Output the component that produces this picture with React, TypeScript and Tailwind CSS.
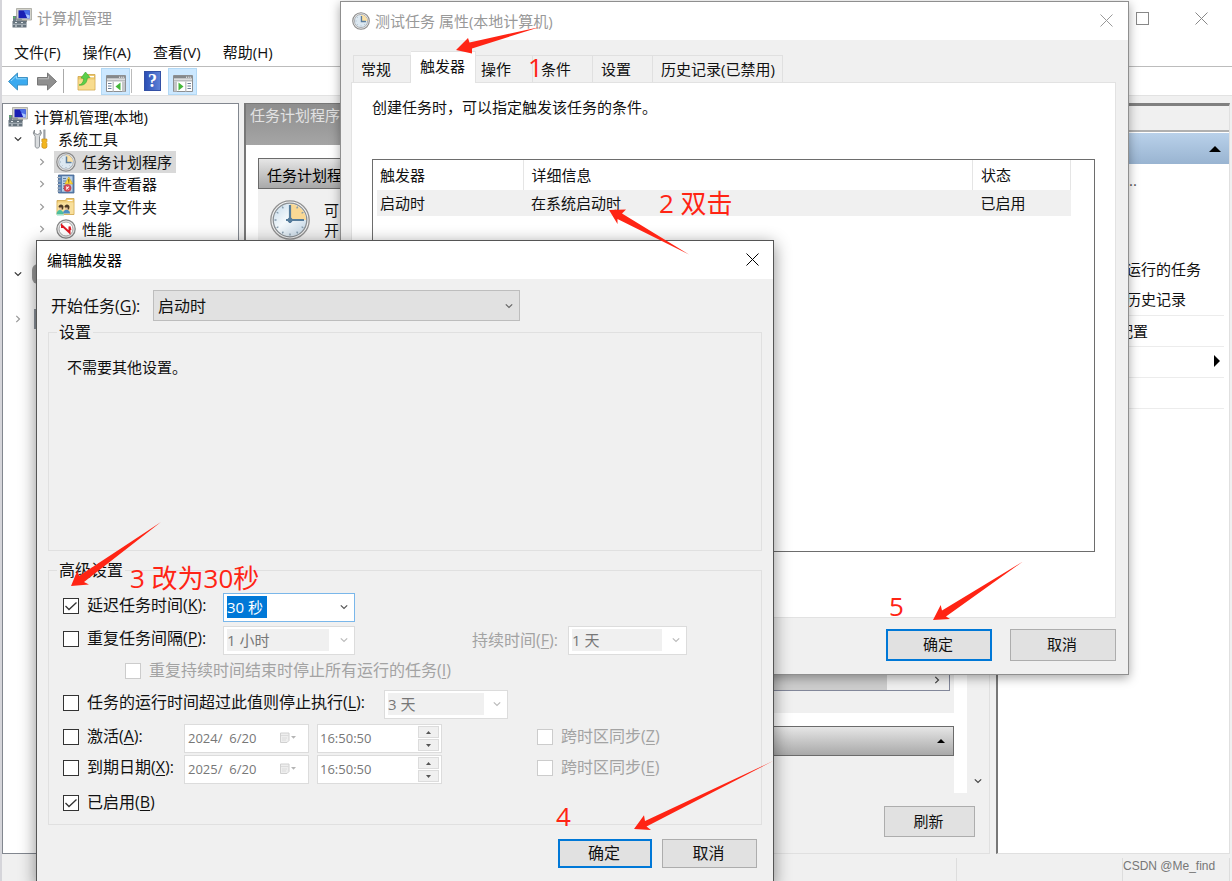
import React from "react";

const ACCENT_SHORTCUT = "underline underline-offset-2 decoration-1";

/* ---------- icons ---------- */

function ComputerIcon({ className = "" }: { className?: string }) {
  return (
    <svg viewBox="0 0 20 20" className={className} aria-hidden="true">
      <path d="M4.500.500h15v11.500h-15z" fill="#d3d3cb" stroke="#a3a39c" strokeWidth=".8" />
      <path d="M6.500 2.300h11.200v8H6.500z" fill="#1a1fb4" />
      <path d="M11.500 2.300h6.200v8h-2z" fill="#4b70e8" />
      <path d="m13.500 6 4.200 1.500v2.800h-2.500z" fill="#a9c6ff" />
      <path d="M9 12h6v2H9z" fill="#9a9a93" />
      <path d="M1 8h3.500v5H1z" fill="#6e7d88" />
      <path d="M1.500 8.700h1.300v1.500H1.500z" fill="#4be04b" />
      <path d="M5 10.500h4.500l1 2.500H5z" fill="#8b9196" />
      <path d="M.500 13h14v6.500H.500z" fill="#66737d" />
      <path d="M.500 15.800h14v.9H.500z" fill="#b8c1c7" />
      <path d="M3 14h2v1H3zm6 0h2v1H9zM3 17.500h2v1H3zm6 0h2v1H9z" fill="#dfe5e8" />
    </svg>
  );
}

function ToolsIcon({ className = "" }: { className?: string }) {
  return (
    <svg viewBox="0 0 20 20" className={className} aria-hidden="true">
      <path d="M2.500 1 1.200 4 3.200 7.500V17c0 2.800 4.300 2.800 4.300 0V7.500L9.500 4 8.200 1v3.500l-2.700 1-3-1z" fill="#d9dcde" stroke="#858a8e" strokeWidth=".9" />
      <path d="M11.600.8h1.600v9h-1.600z" fill="#a3a8ac" stroke="#7c8286" strokeWidth=".4" />
      <path d="M9.900 10h5v2.500l-.7 1 .7 1V18c0 1.800-5 1.800-5 0v-3.500l.7-1-.7-1z" fill="#f3b61f" stroke="#c58b14" strokeWidth=".7" />
    </svg>
  );
}

function SmallClockIcon({ className = "" }: { className?: string }) {
  return (
    <svg viewBox="0 0 20 20" className={className} aria-hidden="true">
      <circle cx="10" cy="10" r="9.200" fill="#e9e9e9" stroke="#8a8a8a" strokeWidth="1.200" />
      <circle cx="10" cy="10" r="7.300" fill="#dce8f1" stroke="#a0a4a8" strokeWidth=".9" />
      <path d="M10 10V3a7 7 0 0 1 7 7z" fill="#fbe0a4" />
      <path d="M10.500 4.500v6h5" fill="none" stroke="#5a7d9e" strokeWidth="1.500" />
      <path d="M10 15v1M4 10h1M5.700 14.300l.7-.7M14.300 14.300l-.7-.7M5.700 5.700l.7.7" stroke="#8ba0b1" strokeWidth=".8" />
    </svg>
  );
}

function ClockIcon({ className = "" }: { className?: string }) {
  return (
    <svg viewBox="0 0 40 40" className={className} aria-hidden="true">
      <defs>
        <linearGradient id="face" x1="0" y1="0" x2="1" y2="1">
          <stop offset="0" stopColor="#c3d9ea" />
          <stop offset=".45" stopColor="#f4f9fc" />
          <stop offset="1" stopColor="#bcd0e0" />
        </linearGradient>
      </defs>
      <circle cx="20" cy="20" r="19.200" fill="#f2f2f2" stroke="#919191" strokeWidth="1.300" />
      <circle cx="20" cy="20" r="16.800" fill="url(#face)" stroke="#8a8f93" strokeWidth="1.300" />
      <path d="M20 20V4A16 16 0 0 1 36 20z" fill="#f9d894" />
      <g stroke="#8298a9" strokeWidth="1.300">
        <path d="M20 33.500v2M4.500 20h2M12.300 6.700l1 1.700M27.700 6.700l-1 1.700M6.700 12.300l1.700 1M6.700 27.700l1.700-1M12.300 33.300l1-1.700M27.700 33.300l-1-1.700M33.300 27.700l-1.700-1M33.300 12.300l-1.700 1" />
      </g>
      <path d="M20 5v18M16 20h18" fill="none" stroke="#557c9c" strokeWidth="2.200" />
      <circle cx="20" cy="20" r="2.500" fill="#557c9c" />
    </svg>
  );
}

function EventIcon({ className = "" }: { className?: string }) {
  return (
    <svg viewBox="0 0 20 20" className={className} aria-hidden="true">
      <path d="M2.500 1h15.500v18H2.500z" fill="#5c83b3" stroke="#44658f" strokeWidth=".8" />
      <path d="M6 2.200h10.500v15.500H6z" fill="#b9d0e6" />
      <path d="M7 4.500h3M7 7h3M7 9.500h2M7 12h2M7 14.500h1" stroke="#5f7d9d" />
      <path d="m12.800 3 4 7H8.800z" fill="#ffd83c" stroke="#c7940a" strokeWidth=".5" />
      <path d="M12.800 5.200v2.600M12.800 8.400v.8" stroke="#4d3b00" strokeWidth=".9" />
      <circle cx="11.500" cy="14" r="3.600" fill="#d94a55" stroke="#b03038" strokeWidth=".5" />
      <path d="m10.200 12.700 2.600 2.600M12.800 12.700l-2.600 2.600" stroke="#fff" strokeWidth="1.100" />
      <path d="M1 3.500h3.500M1 7h3.500M1 10.500h3.500M1 14h3.500M1 17h3.500" stroke="#b4bdc6" strokeWidth="1.200" />
    </svg>
  );
}

function ShareIcon({ className = "" }: { className?: string }) {
  return (
    <svg viewBox="0 0 20 20" className={className} aria-hidden="true">
      <path d="M1 3.500h8.500L10.500 1.500H18v16H1z" fill="#f0cd78" stroke="#cda347" strokeWidth=".8" />
      <path d="M1.500 5.500h16v11.500h-16z" fill="#f8df9c" />
      <path d="M11.500 3h5v1h-5z" fill="#fff" />
      <path d="M2.500 10c0-3.500 5-3.500 5 0l-.5 2.500h-2z" fill="#4c3a26" />
      <path d="M8.500 10c0-3.500 5-3.500 5 0l-.5 2.500h-2z" fill="#4c3a26" />
      <path d="M3.200 10.500h2.500v2.500H3.200zm6 0h2.500v2.500H9.200z" fill="#ecc49b" />
      <path d="M.500 17.500c0-6 7-6 7 0z" fill="#4cbf9e" />
      <path d="M7 16.500c0-5 7-5 7 0z" fill="#4c8fc4" />
      <path d="M1 18h7" stroke="#b2ead9" strokeWidth="1.500" />
    </svg>
  );
}

function PerfIcon({ className = "" }: { className?: string }) {
  return (
    <svg viewBox="0 0 20 20" className={className} aria-hidden="true">
      <circle cx="10" cy="10" r="9.200" fill="#e9e9e9" stroke="#858585" strokeWidth="1.200" />
      <circle cx="10" cy="10" r="7" fill="#fff" stroke="#a8a8a8" strokeWidth="1" />
      <path d="M6 9V6.500l7.500 7V7.500l1 3.500" fill="none" stroke="#e01822" strokeWidth="2" />
    </svg>
  );
}

function NavArrow({ forward = false }: { forward?: boolean }) {
  return (
    <svg viewBox="0 0 22 20" className="h-5 w-[22px]" aria-hidden="true">
      {forward ? (
        <path d="M1.500 6.500H11.500V2L20.500 10.500l-9 8.500v-5H1.500z" fill="#8f8f8f" stroke="#777" strokeLinejoin="round" />
      ) : (
        <path d="M20.500 6.500H10.500V2L1.500 10.500l9 8.500v-5h10z" fill="#3aaaf0" stroke="#3f92c4" strokeLinejoin="round" />
      )}
      <path d={forward ? "M2.500 7.800h10V5" : "M19.500 7.800h-10V5L4 10"} fill="none" stroke={forward ? "#b9b9b9" : "#8fd6fb"} />
    </svg>
  );
}

function FolderUpIcon() {
  return (
    <svg viewBox="0 0 20 20" className="size-5" aria-hidden="true">
      <path d="M2 5.500h8l1.500-2H19v15.500H2z" fill="#eec96c" stroke="#cfa54a" strokeWidth=".8" />
      <path d="M2.500 8.500h16v10h-16z" fill="#f8dc8e" />
      <path d="M13 5h5v1.300h-5z" fill="#fff" />
      <path d="M3 14c2.800-.5 4.300-2.500 4.800-6.500L5 7 9.500 1 14 6.500l-2.700.5c-.3 5-3.300 8-8.300 7z" fill="#5cd04a" stroke="#3aa52e" strokeWidth=".6" />
    </svg>
  );
}

function PaneIcon({ right = false }: { right?: boolean }) {
  return (
    <svg viewBox="0 0 20 17" className="mt-1 h-[17px] w-5" aria-hidden="true">
      <path d="M.500.500h19v16H.500z" fill="#fff" stroke="#8d8f91" />
      <path d="M1 1h18v2.500H1z" fill="#85898c" />
      <path d="M13 2.200h1.200M15.200 2.200h1.200M17.200 2.200h1" stroke="#fff" />
      <path d="M1 4.500h18v2H1z" fill="#b9bcbe" />
      {right ? (
        <>
          <path d="M1 6.500h3v10H1zM12 6.500h1.500v10H12z" fill="#c4c6c8" />
          <path d="m5.500 7.500 5 4-5 4z" fill="#45b83a" />
          <path d="M14.500 8.500h3.500M14.500 11h3.500M14.500 13.500h3.500" stroke="#6a7f98" />
        </>
      ) : (
        <>
          <path d="M6.500 6.500H8v10H6.500zM16 6.500h3v10h-3z" fill="#c4c6c8" />
          <path d="m14.500 7.500-5 4 5 4z" fill="#45b83a" />
          <path d="M2 8.500h3.500M2 11h3.500M2 13.500h3.500" stroke="#6a7f98" />
        </>
      )}
    </svg>
  );
}

function HelpIcon() {
  return (
    <span className="flex h-5 w-[17px] items-center justify-center border border-[#3350a5] bg-linear-to-r from-[#2c4fb5] to-[#5d80d6] font-['Liberation_Serif',serif] text-lg leading-5 font-bold text-white">
      ?
    </span>
  );
}

function CloseIcon({ className = "" }: { className?: string }) {
  return (
    <svg viewBox="0 0 13 13" className={`size-[13px] ${className}`} aria-hidden="true">
      <path d="m.500.500 12 12M12.500.500l-12 12" fill="none" stroke="currentColor" strokeWidth="1" />
    </svg>
  );
}

function Chevron({ className = "", dir = "down" }: { className?: string; dir?: "down" | "right" }) {
  return (
    <svg viewBox="0 0 8 8" className={`size-2 ${className}`} aria-hidden="true">
      <path d={dir === "down" ? "M.800 2.300 4 5.500l3.200-3.200" : "M2.300.800 5.500 4 2.300 7.200"} fill="none" stroke="currentColor" strokeWidth="1.200" />
    </svg>
  );
}

function CalendarIcon() {
  return (
    <svg viewBox="0 0 16 12" className="h-3 w-4" aria-hidden="true">
      <path d="M.500 1h8.500v7.500l-2 2H.500z" fill="#eee" stroke="#d0d0d0" />
      <path d="M1 3.500h8M2 6h5M2 8h4" stroke="#dcdcdc" />
      <path d="M11 4h5l-2.500 2.800z" fill="#b5b5b5" />
    </svg>
  );
}

/* ---------- controls ---------- */

function PushButton({ children, primary = false, className = "" }: { children: React.ReactNode; primary?: boolean; className?: string }) {
  return (
    <button
      type="button"
      className={`flex items-center justify-center bg-[#e1e1e1] pr-0.5 pb-0.5 text-[#111] ${primary ? "border-2 border-[#0078d7]" : "border border-[#adadad]"} ${className}`}
    >
      {children}
    </button>
  );
}

function CheckField({ id, text, shortcut, suffix = "", checked = false, disabled = false, className = "" }: {
  id: string; text: string; shortcut: string; suffix?: string; checked?: boolean; disabled?: boolean; className?: string;
}) {
  return (
    <div className={`flex h-[26px] shrink-0 items-center gap-2 ${className}`}>
      <span className="relative size-4 shrink-0">
        <input
          id={id}
          type="checkbox"
          defaultChecked={checked}
          disabled={disabled}
          className="peer block size-4 appearance-none border border-[#333] bg-white disabled:border-[#ccc]"
        />
        <svg viewBox="0 0 16 16" className="pointer-events-none absolute inset-0 hidden size-4 peer-checked:block" aria-hidden="true">
          <path d="m2.500 8 3.500 3.500L13.500 4.500" fill="none" stroke="#333" strokeWidth="1.300" />
        </svg>
      </span>
      <label htmlFor={id} className={`pb-0.5 text-base leading-6 whitespace-nowrap ${disabled ? "text-[#a3a3a3]" : "text-[#111]"}`}>
        {text}(<span className={ACCENT_SHORTCUT}>{shortcut}</span>){suffix}
      </label>
    </div>
  );
}

function Combo({ label, value, active = false, className = "", fieldClass }: { label: string; value: string; active?: boolean; className?: string; fieldClass: string }) {
  return (
    <div className={`flex h-[29px] shrink-0 items-center justify-between border bg-white pr-1.5 pb-0.5 pl-[3px] ${active ? "border-[#7ab7ea]" : "border-[#dcdcdc]"} ${className}`}>
      <select
        aria-label={label}
        disabled={!active}
        className={`h-[22px] appearance-none leading-[22px] disabled:opacity-100 ${active ? "bg-[#0078d7] text-white" : "bg-[#f0f0f0] text-[#777]"} ${fieldClass}`}
      >
        <option>{value}</option>
      </select>
      <Chevron className={active ? "text-[#555]" : "text-[#bbb]"} />
    </div>
  );
}

function DateTime({ name, date, time }: { name: string; date: string; time: string }) {
  return (
    <div className="flex shrink-0 gap-2 text-[13px] text-[#777]">
      <div className="flex h-[29px] w-[125px] items-center justify-between border border-[#dcdcdc] bg-white pr-3 pb-0.5 pl-[3px]">
        <input aria-label={`${name} 日期`} disabled defaultValue={date} className="w-20 bg-transparent" />
        <CalendarIcon />
      </div>
      <div className="flex h-[29px] w-[125px] items-center justify-between border border-[#dcdcdc] bg-white px-0.5">
        <input aria-label={`${name} 时间`} disabled defaultValue={time} className="w-20 bg-transparent pb-0.5" />
        <div className="flex flex-col gap-px">
          {["M0 3h5L2.500 0z", "M0 0h5L2.500 3z"].map((d) => (
            <button key={d} type="button" disabled aria-label={d.startsWith("M0 3") ? "增加" : "减少"} className="flex h-3 w-[21px] items-center justify-center border border-[#dcdcdc] bg-[#f0f0f0]">
              <svg viewBox="0 0 5 3" className="h-[3px] w-[5px]"><path d={d} fill="#555" /></svg>
            </button>
          ))}
        </div>
      </div>
    </div>
  );
}

/* ---------- main window ---------- */

type Node = { text?: string; level: number; arrow?: "down" | "right"; icon?: React.ReactNode; selected?: boolean };

const TREE: Node[] = [
  { text: "计算机管理(本地)", level: 0, icon: <ComputerIcon className="size-5" /> },
  { text: "系统工具", level: 1, arrow: "down", icon: <ToolsIcon className="size-5" /> },
  { text: "任务计划程序", level: 2, arrow: "right", icon: <SmallClockIcon className="size-5" />, selected: true },
  { text: "事件查看器", level: 2, arrow: "right", icon: <EventIcon className="size-5" /> },
  { text: "共享文件夹", level: 2, arrow: "right", icon: <ShareIcon className="size-5" /> },
  { text: "性能", level: 2, arrow: "right", icon: <PerfIcon className="size-5" /> },
  { level: 2 },
  { level: 1, arrow: "down", icon: <span className="block size-5 rounded-md bg-[#9b9b9b]" /> },
  { level: 2 },
  { level: 1, arrow: "right", icon: <span className="ml-0.5 block h-5 w-4 bg-[#8d949c]" /> },
];

function Tree() {
  return (
    <nav className="w-[237px] shrink-0 border border-[#82878f] bg-white pt-px">
      <ul>
        {TREE.map((n, i) => (
          <li key={i} className={`flex items-center odd:h-[23px] even:h-[22px] ${n.level === 0 ? "pl-[5px]" : n.level === 1 ? "pl-[11px]" : "pl-[35px]"}`}>
            {n.level > 0 && <span className="w-4 shrink-0">{n.arrow && <Chevron dir={n.arrow} className={n.arrow === "down" ? "text-[#333]" : "text-[#999]"} />}</span>}
            <span className={`flex h-[22px] items-center gap-1.5 pr-1 ${n.level > 0 ? "pl-0.5" : ""} ${n.selected ? "bg-[#d9d9d9]" : ""}`}>
              {n.icon}
              {n.text}
            </span>
          </li>
        ))}
      </ul>
    </nav>
  );
}

function SchedulerPane() {
  return (
    <section className="mr-px flex min-w-0 flex-1 flex-col border-t border-r border-b border-l-2 border-t-[#777] border-r-[#e0e0e0] border-b-[#e0e0e0] border-l-[#777]">
      <h2 className="h-[41px] bg-linear-to-b from-[#8e8e8e] to-[#a5a5a5] pl-1 leading-[22px] text-[#e2e2e2]">任务计划程序</h2>
      <div className="flex flex-1">
        <div className="flex flex-1 flex-col bg-white pt-[13px] pr-[13px] pl-3">
          <div className="flex flex-1 flex-col bg-[#f0f0f0]">
            <h3 className="h-[31px] border border-[#6b6b6b] bg-linear-to-b from-[#e6e6e6] to-[#a9a9a9] pl-2 leading-8 text-black">任务计划程序</h3>
            <div className="flex gap-3.5 px-3 pt-[11px]">
              <ClockIcon className="size-10 shrink-0" />
              <p className="w-4 leading-5">可开</p>
            </div>
            <div className="mt-auto mr-1 mb-[22px] flex h-[22px] items-center justify-end border-r border-b border-[#82879a] pr-2">
              <span className="mr-[46px] h-full flex-1 bg-[#cdcdcd]" />
              <Chevron dir="right" className="text-[#444]" />
            </div>
          </div>
          <div className="mt-[13px] h-[67px] bg-[#f0f0f0]">
            <div className="flex h-[30px] items-center justify-end border border-[#6b6b6b] bg-linear-to-b from-[#e6e6e6] to-[#a9a9a9] pr-2">
              <svg viewBox="0 0 8 4" className="h-1 w-2" aria-hidden="true"><path d="M0 4h8L4 0z" /></svg>
            </div>
          </div>
        </div>
        <div className="flex w-[22px] items-end justify-center pb-2">
          <Chevron className="text-[#444]" />
        </div>
      </div>
      <div className="flex h-[60px] justify-end pt-[13px] pr-[14px]">
        <PushButton className="h-[31px] w-[91px]">刷新</PushButton>
      </div>
    </section>
  );
}

function ActionsPane() {
  return (
    <aside className="w-[234px] shrink-0 overflow-hidden border-t-[3px] border-r border-b border-l-2 border-t-[#808080] border-r-[#e0e0e0] border-b-[#e0e0e0] border-l-[#777] bg-white">
      <div className="h-[26px] border-b-2 border-[#b0b0b0] bg-[#f0f0f0]" />
      <div className="mt-px flex h-[31px] items-center justify-end bg-linear-to-b from-[#b9d1ea] to-[#99b4d1] pr-2">
        <svg viewBox="0 0 12 6" className="h-1.5 w-3" aria-hidden="true"><path d="M0 6h12L6 0z" /></svg>
      </div>
      <p className="h-[90px] pl-[127px] leading-8 text-[#555]">...</p>
      <div className="mr-[5px] whitespace-nowrap">
        <p className="h-[30px] pl-[128px] leading-[30px]">运行的任务</p>
        <p className="h-8 border-b border-[#ececec] pl-[128px] leading-[30px]">历史记录</p>
        <p className="h-[31px] border-b border-[#ececec] pl-[120px] leading-[30px]">配置</p>
        <div className="flex h-[31px] items-center justify-end border-b border-[#ececec] pr-1 pb-0.5">
          <svg viewBox="0 0 6 12" className="h-3 w-1.5" aria-hidden="true"><path d="M0 0v12l6-6z" /></svg>
        </div>
        <div className="h-[31px] border-b border-[#ececec]" />
      </div>
    </aside>
  );
}

function MainWindow() {
  return (
    <div className="flex min-h-screen flex-col border-l-2 border-[#d5d5da] bg-[#f0f0f0]">
      <header className="flex h-[37px] items-center gap-[5px] bg-white pr-6 pb-px pl-2.5 text-[#999]">
        <ComputerIcon className="size-5" />
        <h1>计算机管理</h1>
        <div className="ml-auto flex items-center gap-[46px] text-[#888]">
          <button type="button" aria-label="最大化" className="size-[13px] border border-[#888]" />
          <button type="button" aria-label="关闭"><CloseIcon /></button>
        </div>
      </header>
      <nav className="flex h-[29px] items-center gap-[22px] bg-white pl-3">
        {["文件(F)", "操作(A)", "查看(V)", "帮助(H)"].map((m) => <button key={m} type="button">{m}</button>)}
      </nav>
      <div className="flex h-[30px] items-center border-t border-b border-t-[#bcbcbc] border-b-[#e2e2e2] bg-white pl-[5px]">
        <button type="button" aria-label="后退"><NavArrow /></button>
        <button type="button" aria-label="前进" className="ml-[7px]"><NavArrow forward /></button>
        <span className="ml-[5px] h-6 w-px bg-[#aaa]" />
        <button type="button" aria-label="向上" className="ml-3"><FolderUpIcon /></button>
        <button type="button" aria-label="控制台树" className="ml-[5px] flex h-[27px] w-[29px] items-center justify-center border border-[#b3d9f5] bg-[#cce8ff]"><PaneIcon /></button>
        <span className="ml-px h-6 w-px bg-[#bbb]" />
        <button type="button" aria-label="帮助" className="ml-3"><HelpIcon /></button>
        <button type="button" aria-label="操作窗格" className="ml-[7px] flex h-[27px] w-[29px] items-center justify-center border border-[#b3d9f5] bg-[#cce8ff]"><PaneIcon right /></button>
      </div>
      <main className="flex flex-1 gap-[5px] pt-[7px] pr-0.5">
        <Tree />
        <SchedulerPane />
        <ActionsPane />
      </main>
      <footer className="flex h-[27px] justify-end pt-1">
        <span className="w-[166px] border-l border-[#ddd]" />
        <span className="mr-0.5 w-[108px] border-x border-[#ddd] font-['Liberation_Sans',sans-serif] text-xs leading-4 whitespace-nowrap text-[#777]">CSDN @Me_find</span>
      </footer>
    </div>
  );
}

/* ---------- dialogs ---------- */

const TABS = [
  { text: "常规", style: "w-[58px] pl-[7px]" },
  { text: "触发器", style: "w-[65px] pl-[9px]", active: true },
  { text: "操作", style: "w-[57px] pl-[5px]" },
  { text: "条件", style: "w-[60px] pl-2" },
  { text: "设置", style: "w-[60px] pl-2" },
  { text: "历史记录(已禁用)", style: "w-[130px] pl-2" },
];

function PropertiesDialog() {
  return (
    <section role="dialog" aria-label="测试任务 属性" className="absolute top-px left-[340px] w-[789px] border border-[#8f8f8f] bg-[#f0f0f0] pb-[13px] shadow-[0_3px_10px_rgba(0,0,0,0.35)]">
      <header className="flex h-[38px] items-center gap-[5px] bg-white pr-[15px] pb-px pl-[11px] text-[#999]">
        <SmallClockIcon className="size-[18px]" />
        <h2>测试任务 属性(本地计算机)</h2>
        <button type="button" aria-label="关闭" className="ml-auto"><CloseIcon /></button>
      </header>
      <div role="tablist" className="flex h-[42px] items-end pl-3">
        {TABS.map((t) =>
          t.active ? (
            <button key={t.text} role="tab" aria-selected="true" className={`relative -mb-px h-8 border-t border-r border-[#e2e2e2] bg-white pb-[3px] text-left ${t.style}`}>{t.text}</button>
          ) : (
            <button key={t.text} role="tab" aria-selected="false" className={`h-[27px] border-t border-r border-[#e0e0e0] text-left whitespace-nowrap first:border-l ${t.style}`}>{t.text}</button>
          ),
        )}
      </div>
      <div className="mr-3 ml-[10px] h-[536px] border border-[#e2e2e2] bg-white px-5 pt-3">
        <p className="leading-6">创建任务时，可以指定触发该任务的条件。</p>
        <div className="mt-10 h-[393px] border border-[#6d6d6d] pr-[23px] pl-1">
          <table className="w-full table-fixed text-left">
            <thead>
              <tr className="h-[30px]">
                <th className="w-[146px] border-r border-[#e5e5e5] pl-[3px] font-normal">触发器</th>
                <th className="border-r border-[#e5e5e5] pl-2 font-normal">详细信息</th>
                <th className="w-[98px] border-r border-[#e5e5e5] pl-2 font-normal">状态</th>
              </tr>
            </thead>
            <tbody>
              <tr className="h-[26px] bg-[#f0f0f0]">
                <td className="pb-px pl-[3px]">启动时</td>
                <td className="pb-px pl-2">在系统启动时</td>
                <td className="pb-px pl-2">已启用</td>
              </tr>
            </tbody>
          </table>
        </div>
      </div>
      <div className="mt-[11px] flex justify-end gap-[18px] pr-3">
        <PushButton primary className="h-8 w-[106px]">确定</PushButton>
        <PushButton className="h-8 w-[106px]">取消</PushButton>
      </div>
    </section>
  );
}

function TriggerDialog() {
  return (
    <section role="dialog" aria-label="编辑触发器" className="absolute top-60 left-9 w-[738px] border border-[#555] bg-[#f0f0f0] pb-4 shadow-[0_4px_16px_rgba(0,0,0,0.45)]">
      <header className="flex h-[38px] items-center bg-white pr-[14px] pb-px pl-2.5 text-black">
        <h2>编辑触发器</h2>
        <button type="button" aria-label="关闭" className="ml-auto"><CloseIcon /></button>
      </header>
      <div className="mt-[11px] flex items-center pl-[14px]">
        <label htmlFor="begin" className="w-[102px] text-base leading-6">
          开始任务(<span className={ACCENT_SHORTCUT}>G</span>):
        </label>
        <div className="relative w-[367px]">
          <select id="begin" className="h-[31px] w-full appearance-none border border-[#bdbdbd] bg-[#e1e1e1] pl-1 text-base leading-6">
            <option>启动时</option>
          </select>
          <Chevron className="pointer-events-none absolute top-3 right-[7px] text-[#666]" />
        </div>
      </div>
      <fieldset className="mx-[11px] -mt-px h-[231px] border border-[#e0e0e0] pt-3 pl-[18px]">
        <legend className="-ml-2.5 h-6 px-0.5 text-base leading-6">设置</legend>
        <p className="leading-[22px]">不需要其他设置。</p>
      </fieldset>
      <fieldset className="mx-[11px] mt-[7px] h-[267px] border border-[#e0e0e0] pt-[11px] pl-[14px]">
        <legend className="-ml-1.5 h-6 px-0.5 text-base leading-6">高级设置</legend>
        <div className="flex items-start">
          <CheckField id="delay" text="延迟任务时间" shortcut="K" suffix=":" checked className="w-40" />
          <Combo label="延迟任务时间" value="30 秒" active className="w-[132px]" fieldClass="w-10" />
        </div>
        <div className="mt-1 flex items-start">
          <CheckField id="repeat" text="重复任务间隔" shortcut="P" suffix=":" className="w-40" />
          <Combo label="重复任务间隔" value="1 小时" className="w-[132px]" fieldClass="w-[102px]" />
          <span className="ml-[117px] w-24 text-base leading-[29px] whitespace-nowrap text-[#a3a3a3]">
            持续时间(<span className={ACCENT_SHORTCUT}>F</span>):
          </span>
          <Combo label="持续时间" value="1 天" className="w-[119px]" fieldClass="w-[90px]" />
        </div>
        <CheckField id="stopall" text="重复持续时间结束时停止所有运行的任务" shortcut="I" disabled className="mt-[3px] ml-[62px]" />
        <div className="mt-1.5 flex items-start">
          <CheckField id="limit" text="任务的运行时间超过此值则停止执行" shortcut="L" suffix=":" className="w-[321px]" />
          <Combo label="停止执行" value="3 天" className="w-[124px]" fieldClass="w-[96px]" />
        </div>
        <div className="mt-[5px] flex items-start">
          <CheckField id="activate" text="激活" shortcut="A" suffix=":" className="w-[121px]" />
          <DateTime name="激活" date="2024/  6/20" time="16:50:50" />
          <CheckField id="sync1" text="跨时区同步" shortcut="Z" disabled className="ml-[95px]" />
        </div>
        <div className="mt-0.5 flex items-start">
          <CheckField id="expire" text="到期日期" shortcut="X" suffix=":" className="w-[121px]" />
          <DateTime name="到期日期" date="2025/  6/20" time="16:50:50" />
          <CheckField id="sync2" text="跨时区同步" shortcut="E" disabled className="ml-[95px]" />
        </div>
        <CheckField id="enabled" text="已启用" shortcut="B" checked className="mt-1.5" />
      </fieldset>
      <div className="mt-[14px] flex justify-end gap-2.5 pr-4 text-base">
        <PushButton primary className="h-[29px] w-[94px]">确定</PushButton>
        <PushButton className="h-[29px] w-[95px]">取消</PushButton>
      </div>
    </section>
  );
}

/* ---------- annotations ---------- */

function Arrow({ points, box, className }: { points: string; box: string; className: string }) {
  return (
    <svg viewBox={box} className={`pointer-events-none absolute ${className}`} aria-hidden="true">
      <polygon points={points} fill="#ff2414" />
    </svg>
  );
}

function Annotations() {
  const note = "pointer-events-none absolute text-[26px] leading-8 whitespace-pre text-[#ff2414]";
  return (
    <>
      <Arrow className="top-[26px] left-[455px] h-[30px] w-[86px]" box="455 26 86 30" points="456,50 468,38 469.500,42.500 540,27 472,48.500 472,53.500" />
      <Arrow className="top-[208px] left-[608px] h-[48px] w-[82px]" box="608 208 82 48" points="609,210 626,209.500 622,213.500 689,254.500 617.500,219 617.500,224" />
      <Arrow className="top-[520px] left-[70px] h-[68px] w-[92px]" box="70 520 92 68" points="71,586 77.300,570.700 79,576 161,522 84,582 89,584.500" />
      <Arrow className="top-[760px] left-[633px] h-[72px] w-[141px]" box="633 760 141 72" points="634,829 644,815.300 645,821 773,761 646.500,826.500 651,830" />
      <Arrow className="top-[560px] left-[932px] h-[62px] w-[93px]" box="932 560 93 62" points="933,620 940.700,605 942,610.500 1023,561.500 946,616.500 950,619" />
      <span className={`${note} top-[51px] left-[528px]`}>1</span>
      <span className={`${note} top-[187px] left-[659px]`}>2 双击</span>
      <span className={`${note} top-[562px] left-[130px]`}>3 改为30秒</span>
      <span className={`${note} top-[800px] left-[556px]`}>4</span>
      <span className={`${note} top-[590px] left-[889px]`}>5</span>
    </>
  );
}

export default function App() {
  return (
    <div lang="zh-CN" className="relative min-h-screen overflow-hidden bg-white font-['Open_Sans','Noto_Sans_CJK_SC',sans-serif] text-[15px] leading-5 text-[#111]">
      <MainWindow />
      <PropertiesDialog />
      <TriggerDialog />
      <Annotations />
    </div>
  );
}
